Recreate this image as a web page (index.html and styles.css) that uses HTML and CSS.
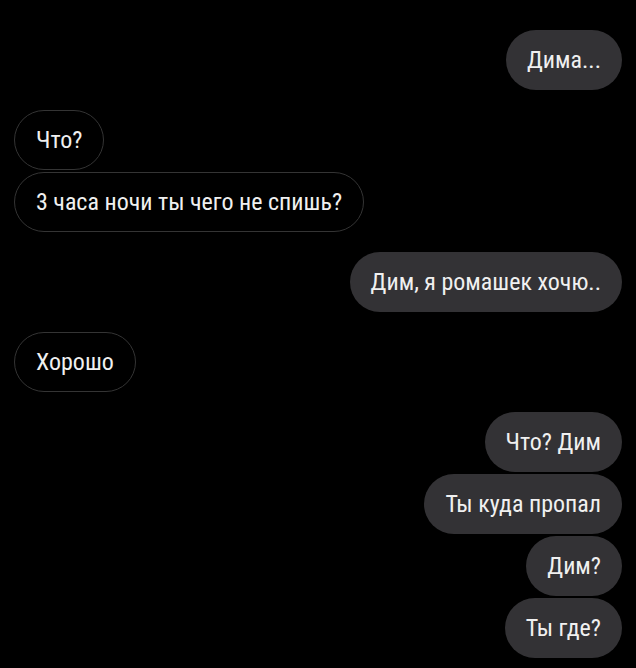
FILE: index.html
```html
<!DOCTYPE html>
<html lang="ru">
<head>
<meta charset="utf-8">
<link rel="stylesheet" href="styles.css">
</head>
<body>
<main class="chat">
  <div class="group out">
    <div class="bubble">Дима...</div>
  </div>
  <div class="group in">
    <div class="bubble">Что?</div>
    <div class="bubble">3 часа ночи ты чего не спишь?</div>
  </div>
  <div class="group out">
    <div class="bubble">Дим, я ромашек хочю..</div>
  </div>
  <div class="group in">
    <div class="bubble">Хорошо</div>
  </div>
  <div class="group out">
    <div class="bubble">Что? Дим</div>
    <div class="bubble">Ты куда пропал</div>
    <div class="bubble">Дим?</div>
    <div class="bubble">Ты где?</div>
  </div>
</main>
</body>
</html>
```

FILE: styles.css
```css
html, body {
  margin: 0;
  background: #000;
}
body {
  width: 636px;
  height: 668px;
  overflow: hidden;
  font-family: Roboto, "Noto Sans", sans-serif;
  font-stretch: condensed;
  color: #f0f0f0;
}
.chat {
  display: flex;
  flex-direction: column;
  gap: 20px;
  padding: 30px 14px 0 14px;
}
.group {
  display: flex;
  flex-direction: column;
  gap: 2px;
}
.group.out { align-items: flex-end; }
.group.in { align-items: flex-start; }
.bubble {
  box-sizing: border-box;
  height: 60px;
  display: flex;
  align-items: center;
  padding: 0 21px 1px;
  border-radius: 30px;
  font-size: 24px;
  white-space: nowrap;
}
.out .bubble {
  background: #333235;
}
.in .bubble {
  background: #000;
  border: 1px solid #343434;
  padding: 0 21px 1px;
}
```
